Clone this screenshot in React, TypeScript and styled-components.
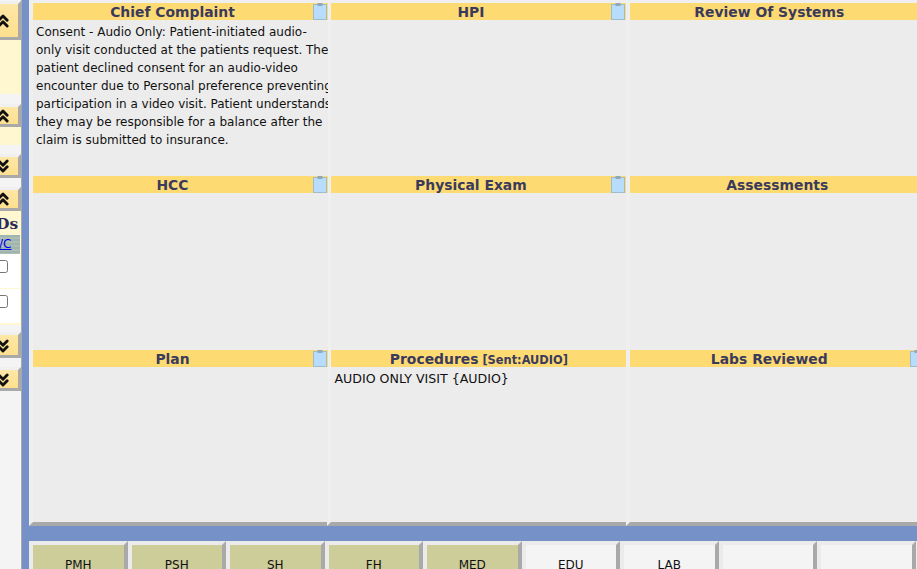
import React from 'react';
import styled, { createGlobalStyle } from 'styled-components';
import { ChevronsUp, ChevronsDown } from 'lucide-react';

const GlobalStyle = createGlobalStyle`
  html, body {
    margin: 0;
    padding: 0;
    overflow: hidden;
    background: #f4f4f4;
  }
`;

const Page = styled.div`
  display: flex;
  width: 917px;
  height: 569px;
  overflow: hidden;
  font-family: 'DejaVu Sans', Verdana, sans-serif;
`;

const Sidebar = styled.div`
  flex: 0 0 21px;
  box-sizing: border-box;
  height: 100%;
  padding-top: 1px;
  background: #f4f4f4;
  display: flex;
  flex-direction: column;
  overflow: hidden;
`;

const Divider = styled.div`
  flex: 0 0 1px;
  background: #a9a9a9;
`;

const Bar = styled.div<{ $h: number; $after: number }>`
  flex: none;
  box-sizing: border-box;
  height: ${p => p.$h}px;
  margin-bottom: ${p => p.$after}px;
  background: linear-gradient(#fde7a6, #fddf8e);
  border-top: 3px solid #f0f0f0;
  border-right: 3px solid #a9a9a9;
  border-bottom: 3px solid #a9a9a9;
  display: flex;
  align-items: center;
  svg {
    flex: none;
    margin-left: -7px;
    color: #111;
  }
`;

const DownBar = styled(Bar)`
  svg {
    margin-top: 2px;
  }
`;

const Cream = styled.div<{ $h: number; $after: number }>`
  flex: none;
  height: ${p => p.$h}px;
  margin-bottom: ${p => p.$after}px;
  background: #fff7d0;
`;

const MedBox = styled.div`
  flex: none;
  height: 114px;
  margin-bottom: 7px;
  background: #fff7d0;
  padding-right: 1px;
`;

const MedTitle = styled.div`
  height: 24px;
  font: bold 15.5px/26px 'DejaVu Serif', serif;
  color: #2a2a55;
  margin-left: -4px;
  white-space: nowrap;
`;

const MedHead = styled.div`
  height: 19px;
  line-height: 19px;
  font-size: 12px;
  background: repeating-linear-gradient(#9fb5ad 0 2px, #aebdb5 2px 4px);
  white-space: nowrap;
  a {
    display: inline-block;
    margin-left: -1px;
    color: #0000ee;
  }
`;

const MedRow = styled.div`
  box-sizing: border-box;
  height: 35px;
  background: #fff;
  border-bottom: 1px solid #fff7d0;
  padding-top: 6px;
  input {
    display: block;
    width: 13px;
    height: 13px;
    margin: 0 0 0 -5px;
  }
`;

const Content = styled.div`
  flex: 0 0 895px;
  display: flex;
  flex-direction: column;
  border-left: 7px solid #7690c8;
  box-sizing: border-box;
  height: 100%;
`;

const Board = styled.div`
  flex: 0 0 526px;
  box-sizing: border-box;
  width: 900px;
  padding-top: 3px;
  background: #efefef;
  display: grid;
  grid-template-columns: repeat(3, 298.4px);
  grid-template-rows: 173px 174px 172px 4px;
`;

const Cell = styled.div`
  padding-left: 4px;
  min-width: 0;
`;

const CellBody = styled.div`
  width: 295px;
  height: 100%;
  background: #ececec;
  overflow: hidden;
`;

const CellHead = styled.div`
  display: flex;
  height: 17px;
  background: #fedb72;
`;

const Title = styled.div`
  flex: 1;
  text-align: center;
  font-size: 13.9px;
  line-height: 18px;
  font-weight: bold;
  color: #3a3a5c;
  white-space: nowrap;
`;

const Sent = styled.span`
  font-size: 11.4px;
`;

const ClipSlot = styled.div`
  flex: 0 0 16px;
  height: 17px;
  padding-left: 1px;
  box-sizing: border-box;
`;

const Text = styled.div`
  padding: 3px 0 0 3px;
  font-size: 12px;
  line-height: 18px;
  color: #111;
  white-space: nowrap;
`;

const ProcText = styled(Text)`
  font-size: 12.6px;
`;

const Notch = styled.div`
  height: 0;
  border-left: 4px solid transparent;
  border-bottom: 4px solid #a9a9a9;
`;

const Band = styled.div`
  flex: 0 0 15px;
  width: 900px;
  background: #7690c8;
`;

const Tabs = styled.div`
  flex: 1;
  display: grid;
  width: 895px;
  grid-template-columns: repeat(9, 98.5px);
  background: #ececec;
  overflow: hidden;
`;

const Tab = styled.div<{ $on?: boolean }>`
  box-sizing: border-box;
  border-top: 4px solid #ebebeb;
  border-left: 4px solid #ebebeb;
  border-right: 4px solid #a9a9a9;
  background: ${p => (p.$on ? '#cdcd99' : '#f4f4f4')};
  text-align: center;
  font-size: 12px;
  line-height: 14px;
  padding-top: 13px;
  color: #111;
`;

const Clipboard = () => (
  <svg width="14" height="17" viewBox="0 0 14 17" style={{ display: 'block' }}>
    <rect x="0.5" y="1.5" width="13" height="15" fill="#b8dcfc" stroke="#9fbccb" />
    <rect x="4.5" y="0" width="5" height="3" fill="#8fa9b8" />
  </svg>
);

type Clip = 'show' | 'blank' | 'none';

const panels: { name: string; clip: Clip }[] = [
  { name: 'Chief Complaint', clip: 'show' },
  { name: 'HPI', clip: 'show' },
  { name: 'Review Of Systems', clip: 'blank' },
  { name: 'HCC', clip: 'show' },
  { name: 'Physical Exam', clip: 'show' },
  { name: 'Assessments', clip: 'none' },
  { name: 'Plan', clip: 'show' },
  { name: 'Procedures', clip: 'none' },
  { name: 'Labs Reviewed', clip: 'show' },
];

const complaint = [
  'Consent - Audio Only: Patient-initiated audio-',
  'only visit conducted at the patients request. The',
  'patient declined consent for an audio-video',
  'encounter due to Personal preference preventing',
  'participation in a video visit. Patient understands',
  'they may be responsible for a balance after the',
  'claim is submitted to insurance.',
];

const tabs = ['PMH', 'PSH', 'SH', 'FH', 'MED', 'EDU', 'LAB', '', ''];

export default function App() {
  const up = <ChevronsUp size={20} strokeWidth={3.4} />;
  const down = <ChevronsDown size={20} strokeWidth={3.4} />;
  return (
    <Page>
      <GlobalStyle />
      <Sidebar>
        <Bar $h={39} $after={0}>{up}</Bar>
        <Cream $h={54} $after={10} />
        <Bar $h={23} $after={0}>{up}</Bar>
        <Cream $h={18} $after={9} />
        <Bar $h={24} $after={9}>{down}</Bar>
        <Bar $h={24} $after={0}>{up}</Bar>
        <MedBox>
          <MedTitle>Ds</MedTitle>
          <MedHead><a href="#c">/C</a></MedHead>
          <MedRow><input type="checkbox" /></MedRow>
          <MedRow><input type="checkbox" /></MedRow>
        </MedBox>
        <DownBar $h={26} $after={9}>{down}</DownBar>
        <DownBar $h={24} $after={0}>{down}</DownBar>
      </Sidebar>
      <Divider />
      <Content>
        <Board>
          {panels.map(p => (
            <Cell key={p.name}>
              <CellBody>
                <CellHead>
                  <Title>
                    {p.name}
                    {p.name === 'Procedures' && <Sent> [Sent:AUDIO]</Sent>}
                  </Title>
                  {p.clip !== 'none' && (
                    <ClipSlot>{p.clip === 'show' && <Clipboard />}</ClipSlot>
                  )}
                </CellHead>
                {p.name === 'Chief Complaint' && (
                  <Text>
                    {complaint.map(line => (
                      <div key={line}>{line}</div>
                    ))}
                  </Text>
                )}
                {p.name === 'Procedures' && <ProcText>AUDIO ONLY VISIT {'{AUDIO}'}</ProcText>}
              </CellBody>
            </Cell>
          ))}
          <Notch />
          <Notch />
          <Notch />
        </Board>
        <Band />
        <Tabs>
          {tabs.map((t, i) => (
            <Tab key={i} $on={i < 5}>{t}</Tab>
          ))}
        </Tabs>
      </Content>
    </Page>
  );
}
